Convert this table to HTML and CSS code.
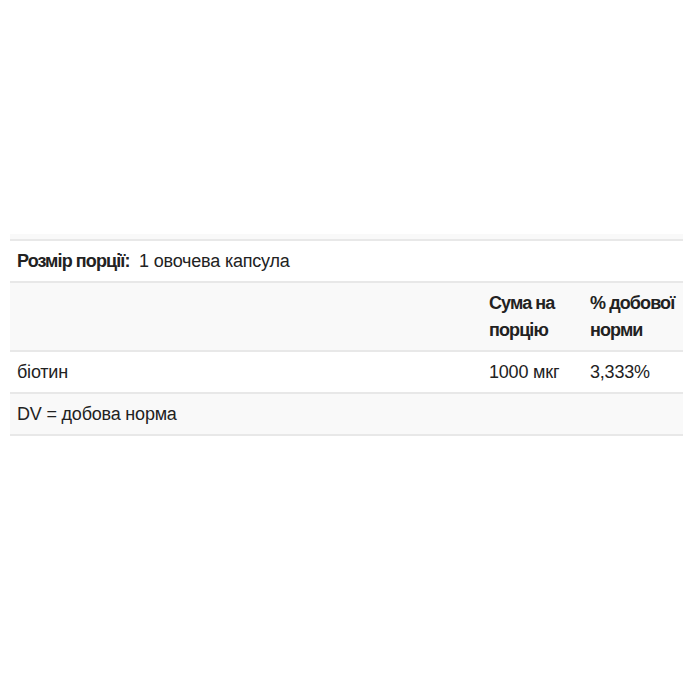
FILE: index.html
```html
<!DOCTYPE html>
<html lang="uk">
<head>
<meta charset="utf-8">
<link rel="stylesheet" href="styles.css">
</head>
<body>
<div class="wrap">
  <div class="band"></div>
  <table class="facts">
    <tr class="serving">
      <td colspan="3"><b>Розмір порції:</b>&nbsp; 1 овочева капсула</td>
    </tr>
    <tr class="head alt">
      <td></td>
      <td class="c2"><b>Сума на порцію</b></td>
      <td class="c3"><b>% добової норми</b></td>
    </tr>
    <tr>
      <td>біотин</td>
      <td class="c2">1000 мкг</td>
      <td class="c3">3,333%</td>
    </tr>
    <tr class="alt">
      <td colspan="3">DV = добова норма</td>
    </tr>
  </table>
</div>
</body>
</html>
```
FILE: styles.css
```css
html, body {
  margin: 0;
  padding: 0;
  background: #fff;
}
body {
  font-family: "Liberation Sans", Arial, sans-serif;
  font-size: 18px;
  color: #222;
}
.wrap {
  padding: 234px 17px 0 10px;
}
.band {
  height: 5px;
  background: #f9f9f9;
}
.facts {
  width: 100%;
  border-collapse: collapse;
  border-top: 2px solid #e8e8e8;
}
.facts td {
  padding: 8px 7px;
  line-height: 24px;
  border-bottom: 2px solid #e8e8e8;
  vertical-align: top;
  letter-spacing: -0.2px;
}
.facts b {
  font-weight: bold;
  letter-spacing: -0.9px;
}
.alt td {
  background: #f9f9f9;
}
.head td {
  line-height: 27px;
  padding-top: 7px;
  padding-bottom: 6px;
}
.c2 {
  width: 87px;
}
.c3 {
  width: 86px;
}
```
